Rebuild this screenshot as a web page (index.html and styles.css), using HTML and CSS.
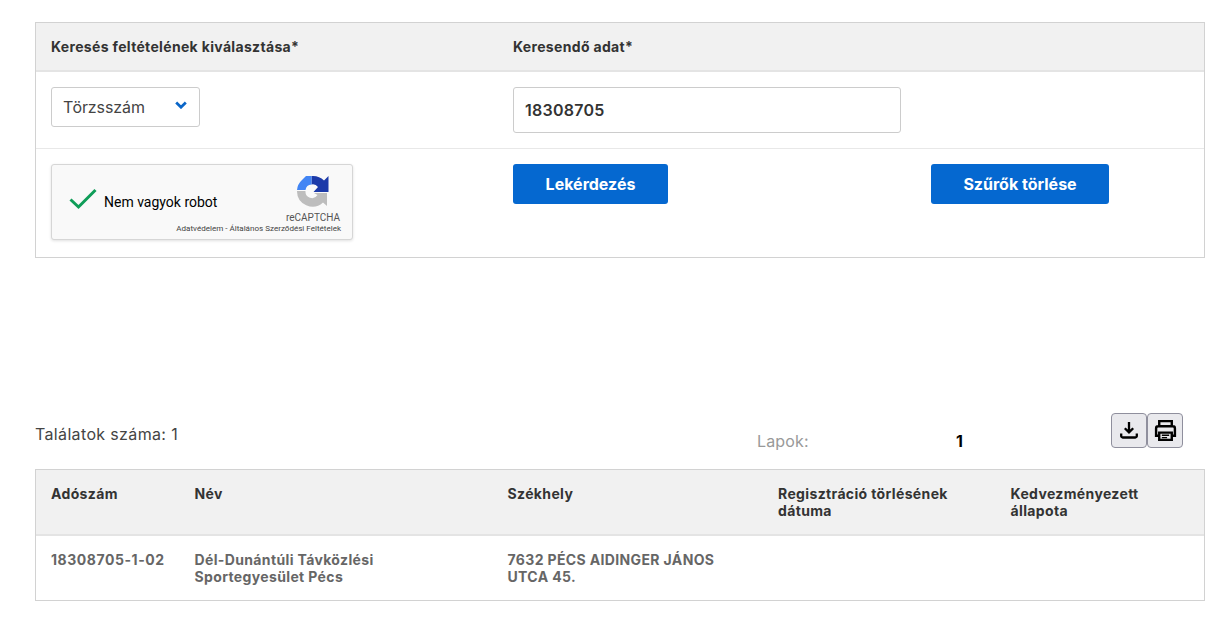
FILE: index.html
```html
<!DOCTYPE html>
<html lang="hu">
<head>
<meta charset="utf-8">
<title>Keresés</title>
<link rel="stylesheet" href="styles.css">
</head>
<body>
<section class="panel">
  <div class="panel-head">
    <div>Keresés feltételének kiválasztása*</div>
    <div>Keresendő adat*</div>
  </div>
  <div class="panel-fields">
    <div class="select">
      <span>Törzsszám</span>
      <svg class="chev" width="12" height="8" viewBox="0 0 12 8"><path d="M1.200 1.600 6 6.200l4.800-4.600" fill="none" stroke="#0a66c8" stroke-width="2.800"/></svg>
    </div>
    <div class="input">18308705</div>
  </div>
  <div class="panel-actions">
    <div class="captcha">
      <svg class="check" width="28" height="22" viewBox="0 0 28 22"><path d="M1.500 11.500 9.500 19 26.500 2" fill="none" stroke="#0f9d58" stroke-width="3"/></svg>
      <span class="captcha-label">Nem vagyok robot</span>
      <div class="captcha-brand">
        <svg width="32" height="32" viewBox="0 0 32 32">
          <path d="M14.500 1A15.500 15.500 0 0 1 27 5.500L31.500 1V17H16.500L21 12A6.500 6.500 0 0 0 14.500 9.500Z" fill="#1c3aa9"/>
          <path d="M0 15A15.500 15.500 0 0 1 5 5L9 1H14.500V9.500A6.500 6.500 0 0 0 8.500 15Z" fill="#4285f4"/>
          <path d="M0 16H8.500A6.500 6.500 0 0 0 20.500 20L17 18H30V31L26 27.500A15.500 15.500 0 0 1 0 16Z" fill="#bdbdbd"/>
        </svg>
        <span class="captcha-name">reCAPTCHA</span>
      </div>
      <span class="captcha-links">Adatvédelem - Általános Szerződési Feltételek</span>
    </div>
    <button class="btn btn-query" type="button">Lekérdezés</button>
    <button class="btn btn-clear" type="button">Szűrők törlése</button>
  </div>
</section>

<div class="toolbar">
  <div class="count">Találatok száma: 1</div>
  <div class="pages"><span class="pages-label">Lapok:</span><b class="pages-num">1</b></div>
  <div class="tools">
    <button class="tool" type="button" aria-label="Letöltés">
      <svg width="18" height="17" viewBox="0 0 18 17"><path d="M9 0v10M4.800 6.200 9 10.400l4.200-4.200M1.200 11.500v2.500a1.500 1.500 0 0 0 1.500 1.500h12.600a1.500 1.500 0 0 0 1.500-1.500v-2.500" fill="none" stroke="#000" stroke-width="2.300"/></svg>
    </button>
    <button class="tool" type="button" aria-label="Nyomtatás">
      <svg width="23" height="23" viewBox="0 0 22 22"><path d="M5 7V2h12v5M5 16H2V9a2 2 0 0 1 2-2h14a2 2 0 0 1 2 2v7h-3M5 13h12v7H5z" fill="none" stroke="#000" stroke-width="2.300"/><path d="M7.500 15.500h7M7.500 17.800h5" stroke="#000" stroke-width="1.400"/></svg>
    </button>
  </div>
</div>

<section class="results">
  <div class="row row-head">
    <div>Adószám</div>
    <div>Név</div>
    <div>Székhely</div>
    <div>Regisztráció törlésének dátuma</div>
    <div>Kedvezményezett állapota</div>
  </div>
  <div class="row row-body">
    <div class="tax-id">18308705-1-02</div>
    <div>Dél-Dunántúli Távközlési Sportegyesület Pécs</div>
    <div>7632 PÉCS AIDINGER JÁNOS UTCA 45.</div>
    <div></div>
    <div></div>
  </div>
</section>
</body>
</html>
```
FILE: styles.css
```css
* { box-sizing: border-box; }
html, body { margin: 0; background: #fff; }
body {
  width: 1218px;
  height: 617px;
  overflow: hidden;
  padding: 22px 13px 0 35px;
  font-family: Inter, "Liberation Sans", sans-serif;
  color: #333;
}
.panel { border: 1px solid #d2d2d2; height: 236px; }
.panel-head {
  display: grid;
  grid-template-columns: 462px 1fr;
  height: 49px;
  padding: 15px 0 0 15px;
  background: #f1f1f1;
  border-bottom: 2px solid #e4e4e4;
  font-size: 14px;
  font-weight: 700;
  line-height: 17px;
  letter-spacing: .33px;
}
.panel-fields {
  display: grid;
  grid-template-columns: 462px 388px;
  align-items: start;
  height: 77px;
  padding: 15px 0 0 15px;
  border-bottom: 1px solid #e8e8e8;
}
.select {
  display: flex;
  align-items: center;
  justify-content: space-between;
  width: 149px;
  height: 40px;
  padding: 0 12px 0 11px;
  border: 1px solid #ccc;
  border-radius: 3px;
  font-size: 16px;
  letter-spacing: -.1px;
  color: #444;
}
.chev { margin-bottom: 4px; }
.input {
  height: 46px;
  padding: 13px 11px 0;
  border: 1px solid #ccc;
  border-radius: 3px;
  font-size: 16px;
  font-weight: 600;
  line-height: 19px;
  letter-spacing: .25px;
}
.panel-actions {
  display: grid;
  grid-template-columns: 462px 418px 178px;
  align-items: start;
  padding: 15px 0 0 15px;
}
.captcha {
  position: relative;
  width: 302px;
  height: 76px;
  background: #f9f9f9;
  border: 1px solid #d6d6d6;
  border-radius: 3px;
  box-shadow: 0 1px 3px rgba(0, 0, 0, .12);
  font-family: Roboto, sans-serif;
  color: #000;
}
.check { position: absolute; left: 17px; top: 23px; }
.captcha-label { position: absolute; left: 52px; top: 29px; font-size: 14px; line-height: 16px; }
.captcha-brand {
  position: absolute;
  right: 11px;
  top: 10px;
  display: flex;
  flex-direction: column;
  align-items: center;
  width: 56px;
}
.captcha-name { margin-top: 5px; font-size: 10px; line-height: 12px; color: #555; white-space: nowrap; }
.captcha-links { position: absolute; right: 11px; top: 59px; font-size: 8.050px; line-height: 10px; color: #444; white-space: nowrap; }
.btn {
  height: 40px;
  border: 0;
  border-radius: 3px;
  background: #0568d0;
  color: #fff;
  font: 700 16px/18px Inter, "Liberation Sans", sans-serif;
}
.btn-query { width: 155px; }
.btn-clear { width: 178px; }
.toolbar {
  display: flex;
  align-items: flex-start;
  height: 211px;
  padding-top: 155px;
}
.count { width: 722px; margin-top: 11px; font-size: 16px; line-height: 20px; letter-spacing: .35px; color: #444; }
.pages { display: flex; width: 354px; margin-top: 18px; font-size: 16px; line-height: 20px; }
.pages-label { width: 199px; letter-spacing: .15px; color: #999; }
.pages-num { color: #000; font-weight: 700; }
.tools { display: flex; }
.tool {
  display: flex;
  align-items: center;
  justify-content: center;
  width: 36px;
  height: 35px;
  padding: 0;
  background: #e9e9ed;
  border: 1px solid #8f8f9d;
  border-radius: 4px;
}
.results { border: 1px solid #d2d2d2; height: 132px; }
.row {
  display: grid;
  grid-template-columns: 143.500px 313px 270.500px 232.500px 1fr;
  padding-left: 15px;
  font-size: 14px;
  font-weight: 700;
  line-height: 17px;
  letter-spacing: .36px;
}
.row > div { padding-right: 32px; }
.row > div:nth-child(2) { padding-right: 60px; }
.row-head {
  height: 66px;
  padding-top: 15px;
  background: #f1f1f1;
  border-bottom: 2px solid #e4e4e4;
}
.row-body { padding-top: 15px; color: #666; }
.row > .tax-id { padding-right: 0; letter-spacing: .55px; }
```
